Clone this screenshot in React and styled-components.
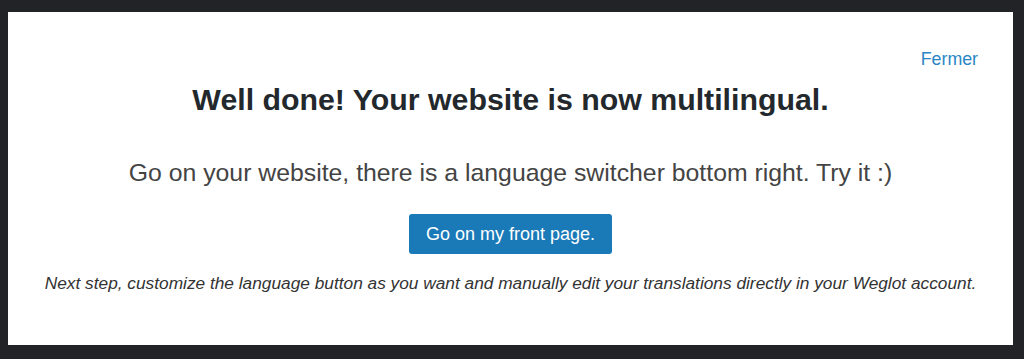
import styled, { createGlobalStyle } from "styled-components";

const GlobalStyle = createGlobalStyle`
  html, body {
    margin: 0;
    padding: 0;
    background: #222326;
  }
  body {
    font-family: "Liberation Sans", Arial, sans-serif;
  }
`;

const Page = styled.div`
  width: 1024px;
  height: 359px;
  padding: 12px 11px 14px 8px;
  box-sizing: border-box;
`;

const Card = styled.div`
  background: #fff;
  height: 100%;
  box-sizing: border-box;
  padding: 38px 35px 0 35px;
  display: flex;
  flex-direction: column;
  align-items: center;
`;

const TopBar = styled.div`
  align-self: stretch;
  display: flex;
  justify-content: flex-end;
`;

const CloseLink = styled.a`
  color: #2a86c4;
  font-size: 17.8px;
  line-height: 18px;
  text-decoration: none;
  cursor: pointer;
`;

const Title = styled.h2`
  margin: 15px 0 0;
  font-size: 30.3px;
  line-height: 34px;
  font-weight: bold;
  color: #23282d;
  white-space: nowrap;
`;

const Lead = styled.p`
  margin: 41px 0 0;
  font-size: 24.8px;
  line-height: 30px;
  color: #444;
  white-space: nowrap;
`;

const FrontButton = styled.button`
  margin-top: 26px;
  width: 203px;
  height: 40px;
  padding: 0;
  background: #1a7ab8;
  border: none;
  border-radius: 3px;
  color: #fff;
  font-family: inherit;
  font-size: 18px;
  cursor: pointer;
`;

const Note = styled.p`
  margin: 19px 0 0;
  font-size: 17.3px;
  line-height: 20px;
  font-style: italic;
  color: #333;
  white-space: nowrap;
`;

export default function App() {
  return (
    <Page>
      <GlobalStyle />
      <Card>
        <TopBar>
          <CloseLink>Fermer</CloseLink>
        </TopBar>
        <Title>Well done! Your website is now multilingual.</Title>
        <Lead>
          Go on your website, there is a language switcher bottom right. Try it :)
        </Lead>
        <FrontButton>Go on my front page.</FrontButton>
        <Note>
          Next step, customize the language button as you want and manually edit
          your translations directly in your Weglot account.
        </Note>
      </Card>
    </Page>
  );
}
